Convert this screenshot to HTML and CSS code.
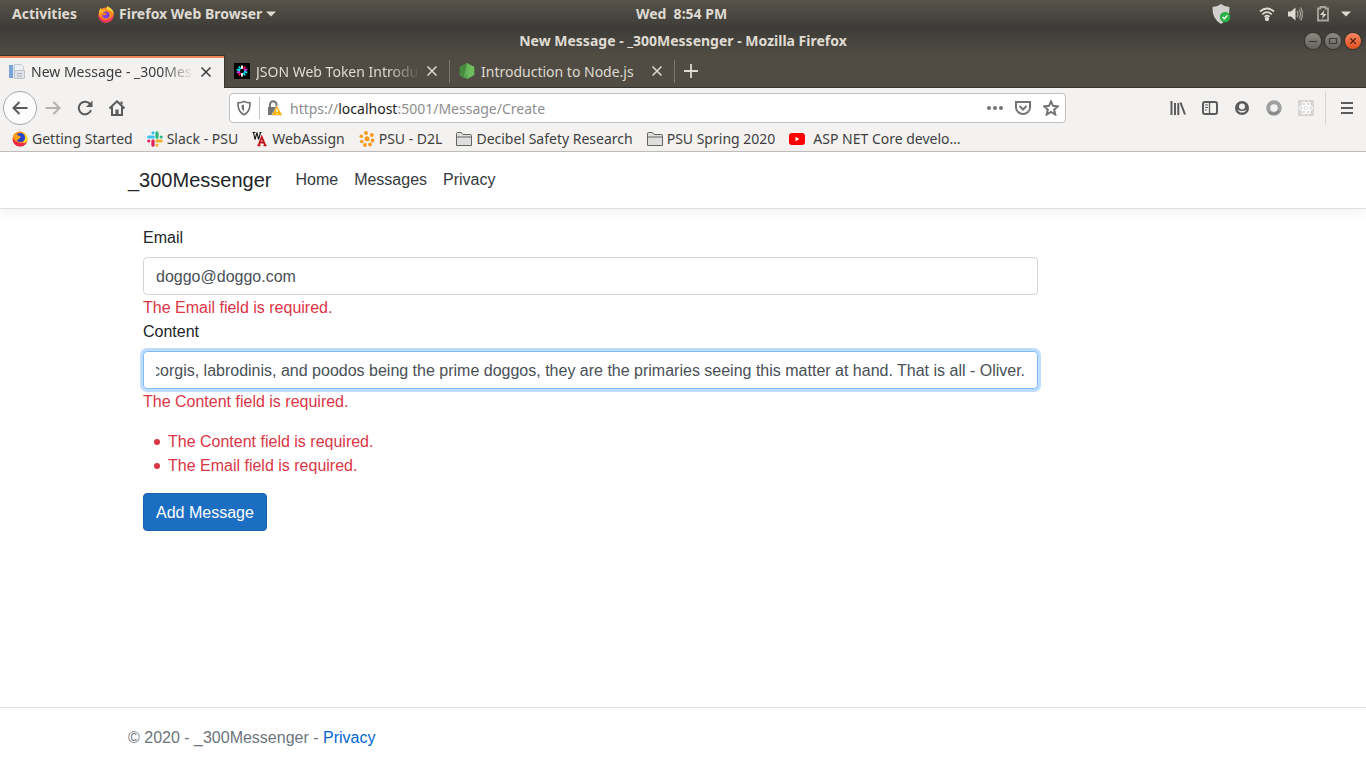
FILE: index.html
```html
<!DOCTYPE html>
<html lang="en">
<head>
<meta charset="utf-8">
<title>New Message - _300Messenger</title>
<link rel="stylesheet" href="styles.css">
</head>
<body>
<header class="topbar">
  <div class="topbar-side">
    <button class="sys-btn">Activities</button>
    <button class="sys-btn app-menu">
      <svg class="i18" viewBox="0 0 18 18"><circle cx="9" cy="10" r="7.6" fill="#ff8a1e"/><path d="M1.4 9Q1 14 5 16.7 9 18.5 13 16.6 17 14 16.8 9 15 14 9 15 4 15 1.4 9z" fill="#f5335f"/><path d="M10 1Q17 4 16.8 10 15 5 10 5z" fill="#ffd43b"/><path d="M2 6 3.5 3 5.5 5 9 5 7 8 3 10z" fill="#ffb52b"/><circle cx="9" cy="10" r="3.6" fill="#7b3fe0"/><path d="M4 8Q8 7 10 9 8 11 6 10z" fill="#ff7a20"/></svg>
      Firefox Web Browser
      <svg class="caret" viewBox="0 0 10 6"><path d="M0 0.5h10L5 5.5z" fill="#dfdbd2"/></svg>
    </button>
  </div>
  <time class="clock">Wed&nbsp; 8:54 PM</time>
  <div class="topbar-side tray">
    <svg class="i20 shield" viewBox="0 0 20 20"><path d="M10 0Q13 2.5 18.5 3 19 15 10 20 1 15 1.500 3 7 2.500 10 0z" fill="#d0cfcb"/><circle cx="14" cy="13" r="5.200" fill="#2db24a"/><path d="M11.500 13l1.800 1.800 3.200-3.400" fill="none" stroke="#fff" stroke-width="1.300"/></svg>
    <svg class="i16 wifi" viewBox="0 0 16 16" fill="none" stroke="#dfdbd2" stroke-width="1.700"><path d="M1 5.500Q8-.5 15 5.500M3.300 8.300Q8 4 12.700 8.300M5.500 10.800Q8 8.500 10.500 10.800"/><circle cx="8" cy="13" r="1.300" fill="#dfdbd2"/></svg>
    <svg class="i16 sound" viewBox="0 0 16 16"><path d="M1 5.500h3L8.500 1.500v13L4 10.500H1z" fill="#dfdbd2"/><path d="M10 5q2 3 0 6M12 3.500q3.200 4.500 0 9M13.500 1.500q4 6.500 0 13" fill="none" stroke="#9b978f" stroke-width="1.400"/></svg>
    <svg class="i16 power" viewBox="0 0 16 16"><path d="M3 2.500h2.500V1h5v1.500H13v12H3z" fill="none" stroke="#aaa69e" stroke-width="1.800"/><path d="M9.500 4 5 9h3l-1 4 4.500-5H8.500z" fill="#dfdbd2"/></svg>
    <svg class="caret" viewBox="0 0 10 6"><path d="M0 0.500h10L5 5.500z" fill="#dfdbd2"/></svg>
  </div>
</header>

<div class="titlebar">
  <span></span>
  <span class="title">New Message - _300Messenger - Mozilla Firefox</span>
  <span class="win-buttons">
    <button class="win" aria-label="Minimize"><svg viewBox="0 0 16 16"><path d="M4 8.500h8" stroke="#3c3b37" stroke-width="1.200"/></svg></button>
    <button class="win" aria-label="Maximize"><svg viewBox="0 0 16 16"><path d="M4.500 5.500h7v5h-7z" fill="none" stroke="#3c3b37" stroke-width="1.200"/></svg></button>
    <button class="win win-close" aria-label="Close"><svg viewBox="0 0 16 16"><path d="M5.300 5.300l5.400 5.400M10.700 5.300l-5.400 5.400" stroke="#5a2312" stroke-width="1.300"/></svg></button>
  </span>
</div>

<div class="tabs">
  <div class="tab active">
    <svg class="i16" viewBox="0 0 16 16"><path d="M0 1h4v13H0z" fill="#7aa5d6"/><path d="M4 1h1v13H4z" fill="#dbe6f2"/><path d="M5.500.5h7l2 2V12h-9z" fill="#edf1f6" stroke="#c6cdd6"/><path d="M7 6.500h8.500v8H5.500V9z" fill="#e1e4e9" stroke="#bfc4cb"/><path d="M8 9.500h5M8 12h5" stroke="#a9b0ba"/></svg>
    <span class="tab-label">New Message - _300Messenger</span>
    <button class="tab-x" aria-label="Close tab"><svg viewBox="0 0 12 12"><path d="M1.500 1.500l9 9M10.500 1.500l-9 9"/></svg></button>
  </div>
  <div class="tab">
    <svg class="i16" viewBox="0 0 16 16"><path d="M0 0h16v16H0z" fill="#000"/><g stroke-width="1.900"><path d="M8 2.500v3.500" stroke="#fff"/><path d="M8 10v3.500" stroke="#fff"/><path d="M11.200 3.600 9.300 6.300M4.800 12.400l1.900-2.700" stroke="#fb015b"/><path d="M4.800 3.600l1.900 2.700M11.200 12.400 9.300 9.700" stroke="#00d4e8"/><path d="M13.300 6.300 10 7.400M2.700 9.700 6 8.600" stroke="#d63aff"/><path d="M2.700 6.300 6 7.400M13.300 9.700 10 8.600" stroke="#00f2e6"/></g></svg>
    <span class="tab-label">JSON Web Token Introduction</span>
    <button class="tab-x" aria-label="Close tab"><svg viewBox="0 0 12 12"><path d="M1.500 1.500l9 9M10.500 1.500l-9 9"/></svg></button>
  </div>
  <div class="tab">
    <svg class="i16" viewBox="0 0 16 16"><path d="M8 0l7.200 4v8L8 16 .8 12V4z" fill="#4f9a48"/><path d="M8 0l7.200 4L5 15 .8 12z" fill="#66b45a"/><path d="M8 0 .8 4v8L5 14.500z" fill="#458c41"/><path d="M11 2l4.200 2v8L8 16z" fill="#70bd60"/></svg>
    <span class="tab-label">Introduction to Node.js</span>
    <button class="tab-x" aria-label="Close tab"><svg viewBox="0 0 12 12"><path d="M1.500 1.500l9 9M10.500 1.500l-9 9"/></svg></button>
  </div>
  <button class="new-tab" aria-label="New tab"><svg class="i16" viewBox="0 0 16 16"><path d="M8 1v14M1 8h14" stroke="#dfdbd2" stroke-width="1.800"/></svg></button>
</div>

<nav class="toolbar" aria-label="Browser toolbar">
  <div class="nav-buttons">
    <button class="tool back" aria-label="Back"><svg class="i16" viewBox="0 0 16 16"><path d="M15.500 8H1.500M7.500 2l-6 6 6 6"/></svg></button>
    <button class="tool forward" aria-label="Forward"><svg class="i16" viewBox="0 0 16 16"><path d="M.5 8h14M8.500 2l6 6-6 6"/></svg></button>
    <button class="tool" aria-label="Reload"><svg class="i16" viewBox="0 0 16 16"><path d="M13.400 4.600A6.300 6.300 0 1 0 14 10.200"/><path d="M15.500.5v6.500H9z" fill="#5b5b5b" stroke="none"/></svg></button>
    <button class="tool" aria-label="Home"><svg class="i16" viewBox="0 0 16 16"><path d="M.5 8.500 8 1.300l7.500 7.200M3 7v8h10V7"/><path d="M6.500 15V9.500h3V15" fill="#5b5b5b" stroke="none"/><path d="M12.500 1.500v3"/></svg></button>
  </div>
  <div class="urlbar">
    <svg class="i16 track" viewBox="0 0 16 16" fill="none" stroke="#737373" stroke-width="1.700"><path d="M8 1.500q3 1.300 6 1.300 .3 9-6 12-6.300-3-6-12 3 0 6-1.300z"/><path d="M8 4.500v7q-2.500-1.500-2.600-6z" fill="#737373" stroke="none"/></svg>
    <span class="url-sep"></span>
    <svg class="i16 lock" viewBox="0 0 16 16"><path d="M3 8V4.500a3 3 0 0 1 6.500 0V7" fill="none" stroke="#737373" stroke-width="2"/><path d="M1 7h10v8H1z" fill="#737373"/><path d="M10 5.500 15.500 15.500H4.500z" fill="#ffb300" stroke="#f4f3f2" stroke-width=".5"/><path d="M10 9v3M10 13v1.300" stroke="#fff" stroke-width="1.300"/></svg>
    <span class="url">https://<b>localhost</b>:5001/Message/Create</span>
    <button class="tool" aria-label="Page actions"><svg class="i16" viewBox="0 0 16 16"><g fill="#737373" stroke="none"><circle cx="2" cy="8" r="2"/><circle cx="8" cy="8" r="2"/><circle cx="14" cy="8" r="2"/></g></svg></button>
    <button class="tool" aria-label="Save to Pocket"><svg class="i16" viewBox="0 0 16 16"><path d="M1 2h14v5.500a7 6.500 0 0 1-14 0z"/><path d="M4.500 6l3.500 3.500L11.500 6"/></svg></button>
    <button class="tool" aria-label="Bookmark"><svg class="i16" viewBox="0 0 16 16"><path d="M8 1.300l2 4.500 4.900.5-3.700 3.300 1.100 4.900L8 12l-4.300 2.500 1.100-4.900L1.100 6.300 6 5.800z"/></svg></button>
  </div>
  <div class="extensions">
    <button class="tool" aria-label="Library"><svg class="i16" viewBox="0 0 16 16"><path d="M1.500 1v14M5 3v12M8.300 3v12M10.500 2.500 15 14.500"/></svg></button>
    <button class="tool" aria-label="Sidebar"><svg class="i16" viewBox="0 0 16 16"><rect x="1" y="2" width="14" height="12" rx="2"/><path d="M7.500 2v12" stroke-width="1.300"/><path d="M3 5h3M3 7.500h3M3 10h2" stroke-width="1"/></svg></button>
    <button class="tool" aria-label="Account"><svg class="i16" viewBox="0 0 16 16"><circle cx="8" cy="8" r="7" fill="#5b5b5b" stroke="none"/><circle cx="8" cy="6.500" r="3" fill="#f3f2f1" stroke="none"/><path d="M3.500 9.500Q8 12.500 12.500 9.500 11.500 12.600 8 12.600T3.500 9.500z" fill="#f3f2f1" stroke="none"/></svg></button>
    <button class="tool" aria-label="Extension"><svg class="i16" viewBox="0 0 16 16"><circle cx="8" cy="8" r="5.800" stroke="#a0a0a0" stroke-width="4"/><path d="M3 12Q8 16 13 11" stroke="#858585" stroke-width="2"/></svg></button>
    <button class="tool" aria-label="React tools"><svg class="i16" viewBox="0 0 16 16"><path d="M0 0h16v16H0z" fill="#d7d6d5" stroke="none"/><g stroke="#fff" stroke-width="1.100"><ellipse cx="8" cy="8" rx="6.500" ry="2.500"/><ellipse cx="8" cy="8" rx="6.500" ry="2.500" transform="rotate(60 8 8)"/><ellipse cx="8" cy="8" rx="6.500" ry="2.500" transform="rotate(120 8 8)"/></g><circle cx="8" cy="8" r="1.300" fill="#fff" stroke="none"/></svg></button>
    <span class="tool-sep"></span>
    <button class="tool" aria-label="Menu"><svg class="i16" viewBox="0 0 16 16"><path d="M2 3h12M2 8h12M2 13h12"/></svg></button>
  </div>
</nav>

<nav class="bookmarks" aria-label="Bookmarks">
  <a href="#"><svg class="i16" viewBox="0 0 16 16"><circle cx="8" cy="8" r="7.500" fill="#ff8a16"/><path d="M.5 7Q1 16 9 15.500 14 15 15.500 9 12 13 8 12 3 11 .5 7z" fill="#ee2746"/><path d="M10 1q6 2 5.500 8Q14 13 11 12 15 8 10 1z" fill="#ffe12e"/><circle cx="8.500" cy="6.500" r="4.600" fill="#2745c9"/><path d="M1 4.500 3 2l2 2 4 1.500L7 8l-3 2z" fill="#ff9e1b"/></svg>Getting Started</a>
  <a href="#"><svg class="i16" viewBox="0 0 16 16" stroke-width="3.200" stroke-linecap="round"><path d="M6 1.800v0M1.800 6h4.500" stroke="#36c5f0"/><path d="M10 1.800v4.500M14.200 6v0" stroke="#2eb67d"/><path d="M6 9.800v4.400M1.800 10v0" stroke="#e01e5a"/><path d="M10 10h4.200M10 14.200v0" stroke="#ecb22e"/></svg>Slack - PSU</a>
  <a href="#"><svg class="i16" viewBox="0 0 16 16" fill="none"><path d="M.5 1.500h3M1.500 1.500l1.500 7 2-7 1.500 7 2-7M7.500 1.500h2" stroke="#111" stroke-width="1.100"/><path d="M6.500 14.500 9.800 6l3.500 8.500M8 11.500h4" stroke="#c4121c" stroke-width="1.900"/><path d="M5.500 14.500h3M11.500 14.500h3" stroke="#c4121c" stroke-width="1.300"/></svg>WebAssign</a>
  <a href="#"><svg class="i16" viewBox="0 0 16 16" fill="#f79a1c"><circle cx="7" cy="2" r="1.900"/><circle cx="2.300" cy="5.300" r="1.800"/><circle cx="12.800" cy="4" r="1.900"/><circle cx="8" cy="7.800" r="2.500"/><circle cx="2.800" cy="10.500" r="1.800"/><circle cx="13.500" cy="9.500" r="1.900"/><circle cx="6" cy="14" r="1.900"/><circle cx="11" cy="13.500" r="1.900"/></svg>PSU - D2L</a>
  <a href="#"><svg class="i16" viewBox="0 0 16 16"><path d="M.5 14.500v-12q0-1 1-1h4l1.500 2h7.500q1 0 1 1v10z" fill="#dededd" stroke="#646464"/><path d="M1 6h14" stroke="#646464"/></svg>Decibel Safety Research</a>
  <a href="#"><svg class="i16" viewBox="0 0 16 16"><path d="M.5 14.500v-12q0-1 1-1h4l1.500 2h7.500q1 0 1 1v10z" fill="#dededd" stroke="#646464"/><path d="M1 6h14" stroke="#646464"/></svg>PSU Spring 2020</a>
  <a href="#" class="video"><svg class="i16" viewBox="0 0 16 16"><rect y="2" width="16" height="12" rx="3" fill="#f00"/><path d="M6.500 5.800 10.300 8l-3.800 2.200z" fill="#fff"/></svg>ASP NET Core develo…</a>
</nav>

<div class="page">
  <header class="site-header">
    <nav class="container site-nav">
      <a class="brand" href="#">_300Messenger</a>
      <a class="nav-link" href="#">Home</a>
      <a class="nav-link" href="#">Messages</a>
      <a class="nav-link" href="#">Privacy</a>
    </nav>
  </header>
  <main class="container">
    <form class="message-form">
      <label for="email">Email</label>
      <input class="field" id="email" type="text" value="doggo@doggo.com">
      <span class="error">The Email field is required.</span>
      <label for="content">Content</label>
      <input class="field" id="content" type="text" value="corgis, labrodinis, and poodos being the prime doggos, they are the primaries seeing this matter at hand. That is all - Oliver.">
      <span class="error">The Content field is required.</span>
      <ul class="summary">
        <li>The Content field is required.</li>
        <li>The Email field is required.</li>
      </ul>
      <button class="submit" type="button">Add Message</button>
    </form>
  </main>
  <footer class="site-footer">
    <div class="container">© 2020 - _300Messenger - <a href="#">Privacy</a></div>
  </footer>
</div>
<script src="main.js"></script>
</body>
</html>
```

FILE: styles.css
```css
* { box-sizing: border-box; }
body {
  margin: 0;
  min-height: 100vh;
  display: flex;
  flex-direction: column;
  background: #fff;
  font-family: "Noto Sans", "Open Sans", sans-serif;
  font-size: 14px;
  color: #3f3f3f;
}
button { padding: 0; border: 0; background: none; font: inherit; color: inherit; }
svg { display: block; flex: none; }
a { color: inherit; text-decoration: none; }
.i16 { width: 16px; height: 16px; }
.i18 { width: 18px; height: 18px; }
.i20 { width: 20px; height: 20px; }
.caret { width: 10px; height: 6px; }

/* Desktop panel */
.topbar {
  display: grid;
  grid-template-columns: 1fr auto 1fr;
  align-items: center;
  height: 27px;
  padding: 0 15px 0 12px;
  background: linear-gradient(#57534a, #3e3d39);
  color: #dfdbd2;
  font-weight: 700;
}
.topbar-side { display: flex; align-items: center; gap: 20px; }
.sys-btn { display: flex; align-items: center; }
.app-menu { gap: 4px; }
.tray { justify-content: flex-end; gap: 12px; }
.shield { margin-right: 16px; }
.power { margin-right: -2px; }

/* Window title */
.titlebar {
  display: grid;
  grid-template-columns: 1fr auto 1fr;
  align-items: center;
  height: 28px;
  padding: 0 5px 1px;
  background: linear-gradient(#3c3b37, #504c44);
  color: #dfdbd2;
  font-weight: 700;
}
.win-buttons { display: flex; justify-content: flex-end; gap: 4px; }
.win {
  width: 16px;
  height: 16px;
  border-radius: 50%;
  background: linear-gradient(#8d8981, #67645d);
  box-shadow: 0 0 1px 1px #33322e;
}
.win-close { background: linear-gradient(#f58763, #e2511f); }

/* Tabs */
.tabs {
  display: flex;
  height: 33px;
  background: #504c44;
  border-bottom: 1px solid #35342f;
  color: #dfdbd2;
}
.tab {
  display: flex;
  align-items: center;
  gap: 6px;
  width: 225px;
  padding: 0 12px 0 9px;
  position: relative;
}
.tab:not(.active)::after {
  content: "";
  position: absolute;
  right: 0;
  top: 5px;
  bottom: 4px;
  width: 1px;
  background: #7b786f;
}
.tab.active {
  height: 33px;
  background: #f3f2f1;
  border-right: 1px solid #35342f;
  color: #3c3c3c;
  box-shadow: inset 0 1px #35342f, inset 0 3px #f2845a;
}
.tab-label {
  flex: 1;
  overflow: hidden;
  white-space: nowrap;
  mask-image: linear-gradient(to right, #000 calc(100% - 32px), transparent);
}
.tab:nth-child(3) .tab-label { mask-image: none; }
.tab-x svg { width: 12px; height: 12px; fill: none; stroke: currentColor; stroke-width: 1.5; }
.new-tab { padding: 0 8px; }

/* Toolbar */
.toolbar {
  display: grid;
  grid-template-columns: 226px 1fr 289px;
  align-items: center;
  height: 40px;
  padding: 0 11px 0 3px;
  background: #f3f2f1;
}
.tool svg { fill: none; stroke: #5b5b5b; stroke-width: 2; }
.nav-buttons { display: flex; align-items: center; gap: 16px; }
.back {
  display: grid;
  place-items: center;
  width: 34px;
  height: 34px;
  border: 1px solid #a9a8a7;
  border-radius: 50%;
  background: #fcfcfc;
}
.nav-buttons .back { margin-right: -8px; }
.forward svg { stroke: #b3b2b1; }
.urlbar {
  display: flex;
  align-items: center;
  height: 30px;
  padding: 0 6px;
  border: 1px solid #c0bfbe;
  border-radius: 4px;
  background: #fff;
  gap: 7px;
}
.urlbar .tool svg { stroke: #737373; }
.urlbar .tool { margin-left: 5px; }
.url-sep { width: 1px; height: 22px; background: #c8c7c6; }
.url { flex: 1; color: #8e8e8e; }
.url b { font-weight: 400; color: #1c1c1c; }
.extensions { display: flex; align-items: center; justify-content: flex-end; gap: 16px; }
.tool-sep { width: 1px; height: 34px; margin: 0 -3px 0 -5px; background: #d6d5d4; }

/* Bookmarks */
.bookmarks {
  display: flex;
  align-items: center;
  gap: 14px;
  height: 24px;
  padding: 0 12px 2px;
  background: #f3f2f1;
  border-bottom: 1px solid #c0bfbe;
  white-space: nowrap;
}
.bookmarks a { display: flex; align-items: center; gap: 4px; }
.bookmarks .video { gap: 8px; }

/* Page */
.page {
  flex: 1;
  display: flex;
  flex-direction: column;
  font: 16px/24px "Liberation Sans", Arial, sans-serif;
  color: #212529;
}
.container { width: 100%; max-width: 1140px; margin: 0 auto; padding: 0 15px; }
.site-header {
  border-bottom: 1px solid #dee2e6;
  box-shadow: 0 4px 12px rgba(0, 0, 0, 0.05);
  margin-bottom: 17px;
}
.site-nav { display: flex; align-items: center; gap: 16px; height: 56px; }
.brand { font-size: 20px; line-height: 30px; margin-right: 8px; }
.nav-link { color: #343a40; }
main { flex: 1; }
.message-form { width: 83.33%; padding: 0 15px; }
.message-form label { display: block; margin-bottom: 7px; }
.field {
  display: block;
  width: 100%;
  height: 38px;
  padding: 7px 12px 5px;
  border: 1px solid #ced4da;
  border-radius: 4px;
  background: #fff;
  color: #495057;
  font: inherit;
}
.field:focus {
  border-color: #80bdff;
  outline: 0;
  box-shadow: 0 0 0 3px #bfdeff;
  caret-color: transparent;
}
.error { display: block; margin-top: 1px; color: #dc3545; }
.summary { margin: 16px 0 15px; padding-left: 25px; color: #dc3545; list-style: none; }
.summary li { position: relative; }
.summary li::before {
  content: "";
  position: absolute;
  left: -14px;
  top: 9px;
  width: 6px;
  height: 6px;
  border-radius: 50%;
  background: #dc3545;
}
.submit {
  height: 38px;
  padding: 1px 12px 0;
  border: 1px solid #1861ac;
  border-radius: 4px;
  background: #1b6ec2;
  color: #fff;
}
.site-footer { border-top: 1px solid #dee2e6; color: #6c757d; line-height: 60px; }
.site-footer a { color: #0366d6; }
```

FILE: main.js
```js
const content = document.getElementById('content');
content.focus();
content.setSelectionRange(content.value.length, content.value.length);
content.scrollLeft = content.scrollWidth;
```
